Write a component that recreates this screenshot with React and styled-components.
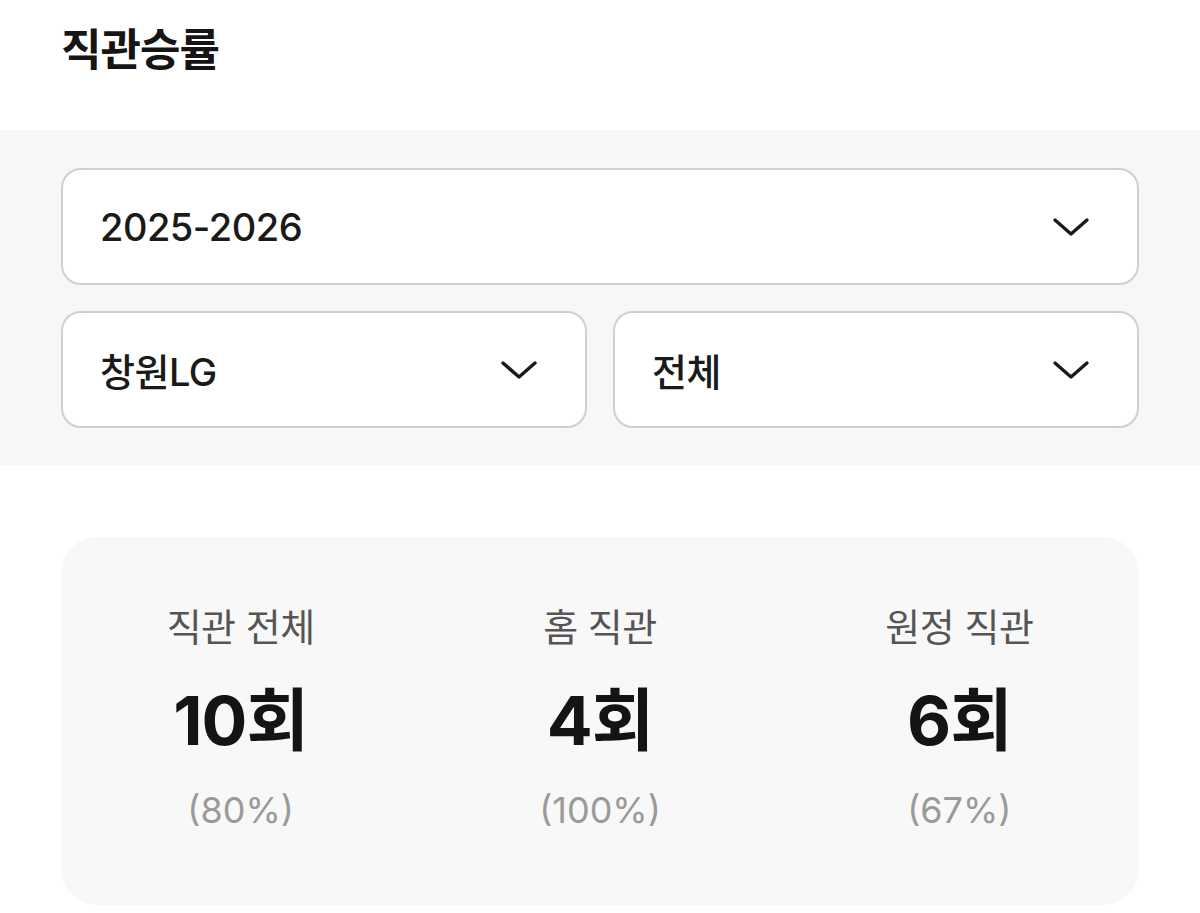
import React from 'react'
import styled, { createGlobalStyle } from 'styled-components'

const GlobalStyle = createGlobalStyle`
  body {
    margin: 0;
    background: #ffffff;
    font-family: Inter, "Noto Sans CJK KR", sans-serif;
    color: #111111;
  }
`

const stats = [
  { label: '직관 전체', count: 10, rate: 80 },
  { label: '홈 직관', count: 4, rate: 100 },
  { label: '원정 직관', count: 6, rate: 67 }
]

const Chevron = () => (
  <svg width="38" height="22" viewBox="0 0 38 22" fill="none">
    <path d="M3 4 L19 18 L35 4" stroke="#1a1a1a" strokeWidth="3.4" strokeLinecap="round" strokeLinejoin="round" />
  </svg>
)

const Select = ({ value }) => (
  <SelectBox>
    <SelectValue>{value}</SelectValue>
    <Chevron />
  </SelectBox>
)

export default function App () {
  return (
    <Page>
      <GlobalStyle />
      <Title>직관승률</Title>
      <FilterBand>
        <Select value="2025-2026" />
        <FilterRow>
          <Select value="창원LG" />
          <Select value="전체" />
        </FilterRow>
      </FilterBand>
      <StatCard>
        {stats.map(s => (
          <StatCol key={s.label}>
            <StatLabel>{s.label}</StatLabel>
            <StatCount>{s.count}회</StatCount>
            <StatRate>({s.rate}%)</StatRate>
          </StatCol>
        ))}
      </StatCard>
    </Page>
  )
}

const Page = styled.div`
  width: 1200px;
  min-height: 913px;
  overflow: hidden;
`

const Title = styled.h1`
  margin: 0;
  padding: 21px 61px 0;
  height: 130px;
  box-sizing: border-box;
  font-size: 44px;
  line-height: 58px;
  font-weight: 700;
  letter-spacing: -1px;
  color: #151515;
`

const FilterBand = styled.div`
  background: #f7f7f7;
  padding: 38px 61px 37px;
  display: flex;
  flex-direction: column;
  gap: 26px;
`

const FilterRow = styled.div`
  display: grid;
  grid-template-columns: 1fr 1fr;
  gap: 26px;
`

const SelectBox = styled.div`
  height: 117px;
  box-sizing: border-box;
  background: #ffffff;
  border: 2px solid #cfcfcf;
  border-radius: 20px;
  padding: 0 47px 0 37px;
  display: flex;
  align-items: center;
  justify-content: space-between;
`

const SelectValue = styled.span`
  font-size: 38px;
  font-weight: 500;
  color: #1a1a1a;
  letter-spacing: -0.5px;
`

const StatCard = styled.div`
  margin: 72px 61px 0;
  height: 368px;
  background: #f8f8f8;
  border-radius: 36px;
  display: grid;
  grid-template-columns: repeat(3, 1fr);
  padding-top: 66px;
  box-sizing: border-box;
`

const StatCol = styled.div`
  display: flex;
  flex-direction: column;
  align-items: center;
`

const StatLabel = styled.div`
  font-size: 38px;
  line-height: 48px;
  color: #555555;
  letter-spacing: -0.5px;
`

const StatCount = styled.div`
  margin-top: 29px;
  font-size: 68px;
  line-height: 80px;
  font-weight: 700;
  color: #141414;
  letter-spacing: -1px;
`

const StatRate = styled.div`
  margin-top: 26px;
  font-size: 36px;
  line-height: 48px;
  color: #9a9a9a;
`
